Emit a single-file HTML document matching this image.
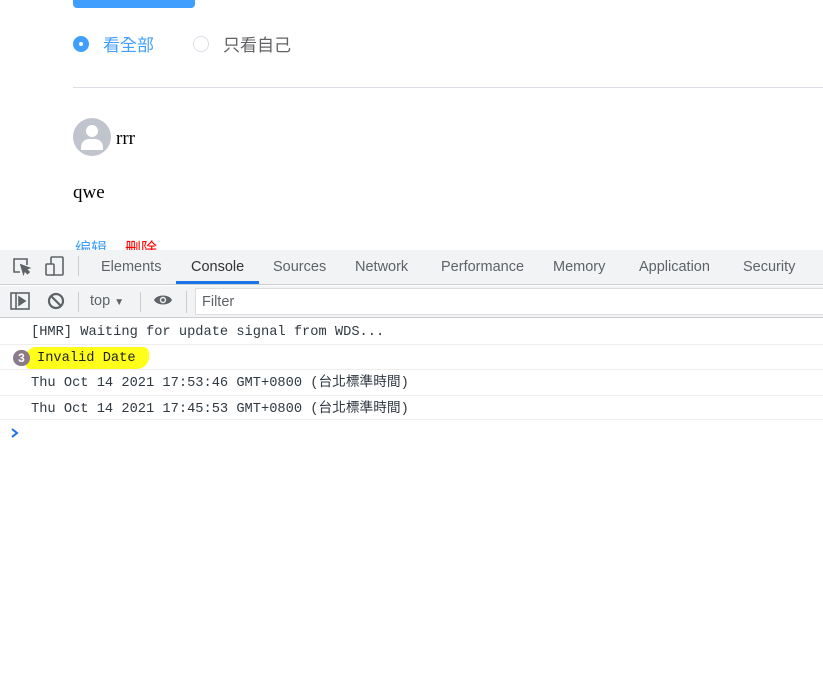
<!DOCTYPE html>
<html><head><meta charset="utf-8"><style>
*{margin:0;padding:0;box-sizing:border-box}
body{width:823px;height:675px;background:#fff;position:relative;overflow:hidden;font-family:"Liberation Sans","Noto Sans CJK TC",sans-serif}
.a{position:absolute}
.mono{font-family:"Liberation Mono","Noto Sans CJK TC",monospace;font-size:13.7px;line-height:16px;color:#303942;white-space:nowrap}
.tab{position:absolute;top:259px;font-size:14.5px;color:#5f6368}
.row{position:absolute;left:0;width:823px;border-bottom:1px solid #eee}
</style></head><body>
<div class="a" style="left:73px;top:-4px;width:122px;height:12px;background:#409eff;border-radius:4px"></div>
<div class="a" style="left:73px;top:36px;width:16px;height:16px;border-radius:50%;background:#409eff"></div>
<div class="a" style="left:79px;top:42px;width:4px;height:4px;border-radius:50%;background:#fff"></div>
<div class="a" style="left:103px;top:35px;font-size:17px;line-height:22px;color:#409eff">看全部</div>
<div class="a" style="left:193px;top:36px;width:16px;height:16px;border-radius:50%;border:1px solid #dcdfe6"></div>
<div class="a" style="left:223px;top:35px;font-size:17px;line-height:22px;color:#606266">只看自己</div>
<div class="a" style="left:73px;top:87px;width:750px;height:1px;background:#dcdfe6"></div>
<div class="a" style="left:73px;top:118px;width:38px;height:38px;border-radius:50%;background:#c0c4cc;overflow:hidden">
<div class="a" style="left:13px;top:7px;width:12px;height:12px;border-radius:50%;background:#fff"></div>
<div class="a" style="left:8px;top:21px;width:22px;height:11px;border-radius:8px 8px 1px 1px;background:#fff"></div></div>
<div class="a" style="left:116px;top:128px;font-family:'Liberation Serif',serif;font-size:19px">rrr</div>
<div class="a" style="left:73px;top:182px;font-family:'Liberation Serif',serif;font-size:19px">qwe</div>
<div class="a" style="left:75px;top:235px;font-size:16px;color:#409eff">编辑</div>
<div class="a" style="left:125px;top:235px;font-size:16px;color:#f00">删除</div>
<div class="a" style="left:0;top:250px;width:823px;height:35px;background:#f1f3f4;border-bottom:1px solid #cbcdd1"></div>
<svg class="a" style="left:12px;top:257px" width="20" height="20" viewBox="0 0 20 20" fill="none" stroke="#5f6368" stroke-width="1.6"><path d="M8 15H2V2h13v6"/><path d="M9 8l8 3-3 1 3 3-1.5 1.5-3-3-1 3z" fill="#5f6368"/></svg>
<svg class="a" style="left:44px;top:255px" width="22" height="22" viewBox="0 0 22 22" fill="none" stroke="#5f6368" stroke-width="1.6"><rect x="7" y="2" width="12" height="18" rx="1"/><rect x="2" y="9" width="8" height="11" rx="1" fill="#f1f3f4"/></svg>
<div class="a" style="left:78px;top:256px;width:1px;height:20px;background:#ccc"></div>
<div class="tab" style="left:101px">Elements</div>
<div class="tab" style="left:191px;color:#333">Console</div>
<div class="a" style="left:176px;top:281px;width:83px;height:3px;background:#1a73e8"></div>
<div class="tab" style="left:273px">Sources</div>
<div class="tab" style="left:355px">Network</div>
<div class="tab" style="left:441px">Performance</div>
<div class="tab" style="left:553px">Memory</div>
<div class="tab" style="left:639px">Application</div>
<div class="tab" style="left:743px">Security</div>
<div class="a" style="left:0;top:286px;width:823px;height:32px;background:#f1f3f4;border-bottom:1px solid #cbcdd1"></div>
<svg class="a" style="left:10px;top:292px" width="20" height="18" viewBox="0 0 20 18" fill="none" stroke="#5f6368" stroke-width="1.6"><rect x="1" y="1" width="18" height="16"/><path d="M6 1v16"/><path d="M9 5l6 4-6 4z" fill="#5f6368"/></svg>
<svg class="a" style="left:47px;top:292px" width="18" height="18" viewBox="0 0 18 18" fill="none" stroke="#5f6368" stroke-width="2.2"><circle cx="9" cy="9" r="7"/><path d="M4 4l10 10"/></svg>
<div class="a" style="left:78px;top:292px;width:1px;height:20px;background:#ccc"></div>
<div class="a" style="left:90px;top:293px;font-size:14.5px;color:#5f6368">top <span style="font-size:10px">▼</span></div>
<div class="a" style="left:140px;top:292px;width:1px;height:20px;background:#ccc"></div>
<svg class="a" style="left:153px;top:293px" width="20" height="14" viewBox="0 0 20 14"><path d="M1 7C4 1 16 1 19 7 16 13 4 13 1 7z" fill="#5f6368"/><circle cx="10" cy="7" r="3.2" fill="#f1f3f4"/><circle cx="10" cy="7" r="1.8" fill="#5f6368"/></svg>
<div class="a" style="left:186px;top:291px;width:1px;height:22px;background:#ccc"></div>
<div class="a" style="left:195px;top:288px;width:640px;height:27px;background:#fff;border:1px solid #ddd"></div>
<div class="a" style="left:202px;top:294px;font-size:14.5px;color:#5f6368">Filter</div>
<div class="row" style="top:319px;height:26px"></div>
<div class="a mono" style="left:31px;top:325px">[HMR] Waiting for update signal from WDS...</div>
<div class="row" style="top:345px;height:25px"></div>
<div class="a" style="left:26px;top:347px;width:123px;height:22px;background:#ffff1a;border-radius:10px 6px 12px 4px"></div>
<div class="a" style="left:13px;top:350px;width:17px;height:16px;border-radius:8px;background:#8a7a8a;color:#fff;font-size:12px;font-weight:bold;text-align:center;line-height:16px">3</div>
<div class="a mono" style="left:37px;top:351px;color:#222">Invalid Date</div>
<div class="row" style="top:370px;height:26px"></div>
<div class="a mono" style="left:31px;top:376px">Thu Oct 14 2021 17:53:46 GMT+0800 (台北標準時間)</div>
<div class="row" style="top:396px;height:24px"></div>
<div class="a mono" style="left:31px;top:402px">Thu Oct 14 2021 17:45:53 GMT+0800 (台北標準時間)</div>
<svg class="a" style="left:10px;top:427px" width="10" height="12" viewBox="0 0 10 12"><path d="M2 2l5 4-5 4" fill="none" stroke="#1a73e8" stroke-width="2"/></svg>
</body></html>
